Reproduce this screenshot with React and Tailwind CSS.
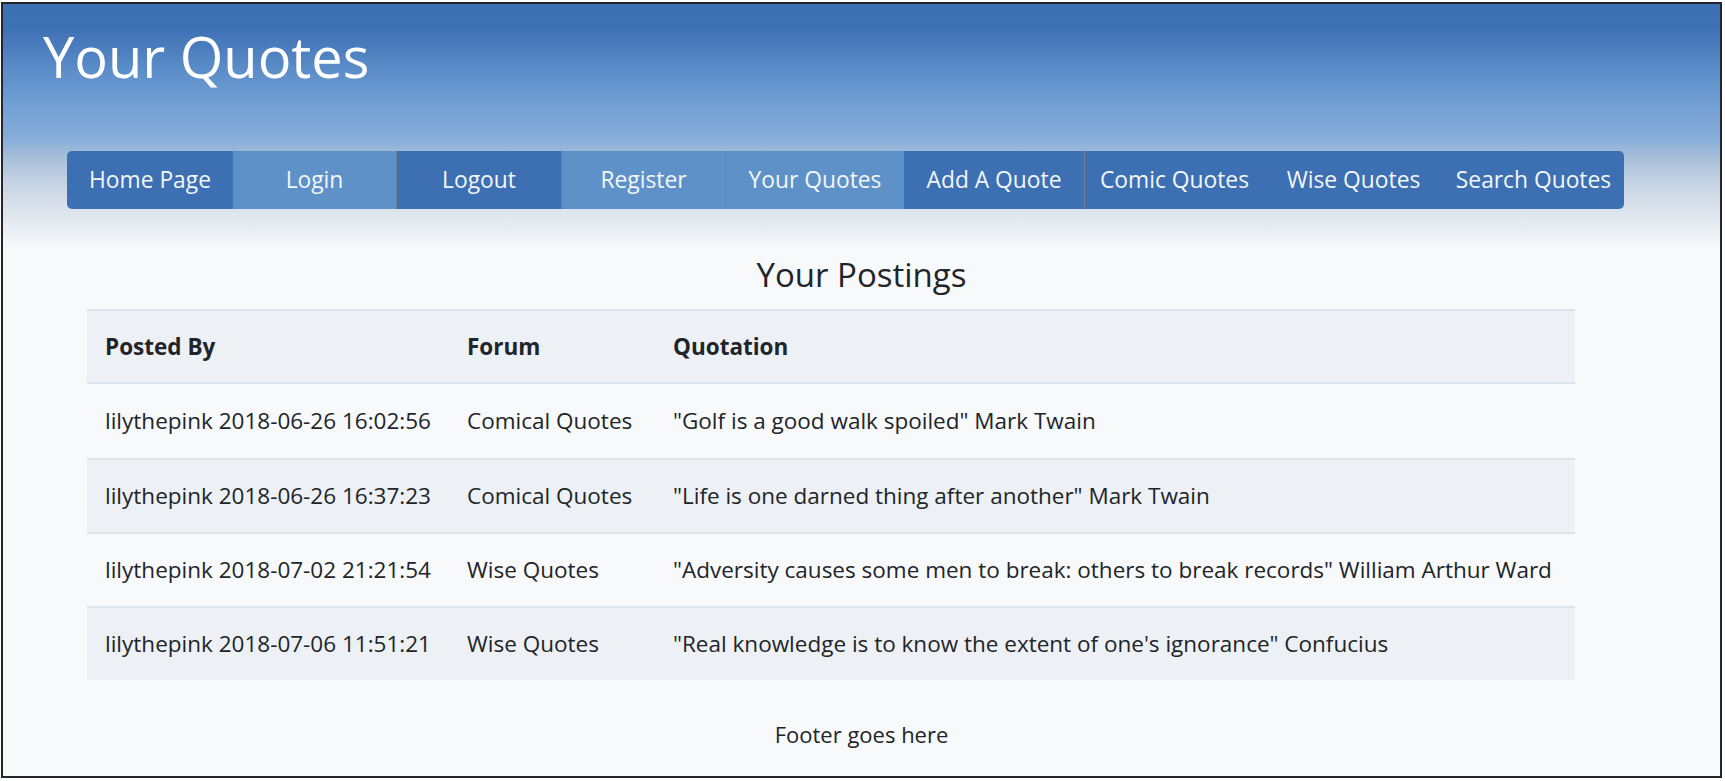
import React from "react";

const navItems = [
  { label: "Home Page", w: "w-[166px]", bg: "bg-[#3d6fb3]", extra: "" },
  { label: "Login", w: "w-[163px]", bg: "bg-[#5f91c9]", extra: "" },
  { label: "Logout", w: "w-[166px]", bg: "bg-[#3d6fb3]", extra: "border-x border-[#6e7c90]" },
  { label: "Register", w: "w-[164px]", bg: "bg-[#5f91c9]", extra: "border-r border-[#5687bd]" },
  { label: "Your Quotes", w: "w-[178px]", bg: "bg-[#5f91c9]", extra: "" },
  { label: "Add A Quote", w: "w-[181px]", bg: "bg-[#3d6fb3]", extra: "border-r border-[#7a7f88]" },
  { label: "Comic Quotes", w: "w-[179px]", bg: "bg-[#3d6fb3]", extra: "" },
  { label: "Wise Quotes", w: "w-[179px]", bg: "bg-[#3d6fb3]", extra: "" },
  { label: "Search Quotes", w: "w-[181px]", bg: "bg-[#3d6fb3]", extra: "" },
];

const rows = [
  ["lilythepink 2018-06-26 16:02:56", "Comical Quotes", "\"Golf is a good walk spoiled\" Mark Twain"],
  ["lilythepink 2018-06-26 16:37:23", "Comical Quotes", "\"Life is one darned thing after another\" Mark Twain"],
  ["lilythepink 2018-07-02 21:21:54", "Wise Quotes", "\"Adversity causes some men to break: others to break records\" William Arthur Ward"],
  ["lilythepink 2018-07-06 11:51:21", "Wise Quotes", "\"Real knowledge is to know the extent of one's ignorance\" Confucius"],
];

export default function App() {
  return (
    <div className="w-[1725px] h-[781px] bg-white pt-[2px] pl-[1px] font-['Open_Sans',sans-serif]">
      <div className="w-[1721px] h-[776px] border-2 border-[#23272d] bg-[#f8f9fb] flex flex-col overflow-hidden">
        <div className="h-[245px] shrink-0 bg-[linear-gradient(to_bottom,#3d6fb3_0px,#3f71b5_26px,#5a8cc8_64px,#73a0d4_102px,#86acd9_134px,#a6bed9_153px,#c3d1e1_176px,#dbe3ec_205px,#ebeff4_228px,#f8f9fb_245px)]">
          <div className="mt-[24px] pl-[40px] text-[56px] leading-none text-white">Your Quotes</div>
          <nav className="mt-[67px] ml-[64px] flex h-[58px] w-[1557px] rounded-[5px] overflow-hidden">
            {navItems.map((it) => (
              <div
                key={it.label}
                className={`${it.w} ${it.bg} ${it.extra} shrink-0 flex items-center justify-center whitespace-nowrap text-[22.8px] text-[#f3f6fb]`}
              >
                {it.label}
              </div>
            ))}
          </nav>
        </div>

        <h2 className="mt-[9px] text-center text-[33px] leading-none text-[#212529]">Your Postings</h2>

        <div className="mt-[18px] ml-[84px] w-[1488px] text-[22.5px] text-[#212529]">
          <div className="grid grid-cols-[362px_206px_920px] h-[75px] items-center border-y-2 border-[#dce3ea] bg-[#edf0f4] font-bold">
            <div className="pl-[18px]">Posted By</div>
            <div className="pl-[18px]">Forum</div>
            <div className="pl-[18px]">Quotation</div>
          </div>
          {rows.map((r, i) => (
            <div
              key={i}
              className={`grid grid-cols-[362px_206px_920px] h-[74px] items-center whitespace-nowrap ${i === 0 ? "" : "border-t-2 border-[#dce3ea]"} ${i % 2 === 1 ? "bg-[#edf0f4]" : ""}`}
            >
              <div className="pl-[18px]">{r[0]}</div>
              <div className="pl-[18px]">{r[1]}</div>
              <div className="pl-[18px]">{r[2]}</div>
            </div>
          ))}
        </div>

        <div className="mt-[43px] text-center text-[22px] leading-none text-[#212529]">Footer goes here</div>
      </div>
    </div>
  );
}
